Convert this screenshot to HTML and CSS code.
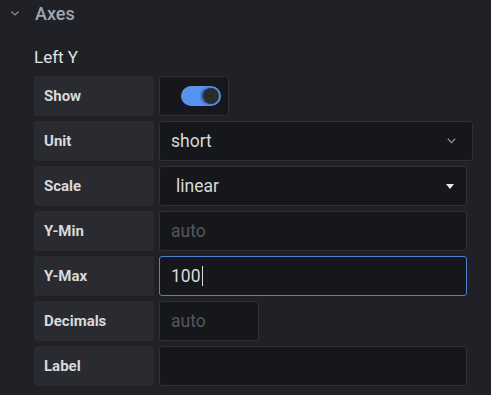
FILE: index.html
```html
<!DOCTYPE html>
<html lang="en">
  <head>
    <meta charset="UTF-8" />
    <meta name="viewport" content="width=device-width, initial-scale=1.0" />
    <title>Axes</title>
    <link rel="stylesheet" href="styles.css">
  </head>
  <body>
    <div class="header">
      <svg class="chevron" width="8" height="5" viewBox="0 0 8 5">
        <path d="M0.5 0.5 L4 4 L7.5 0.5" fill="none" stroke="#8e9096" stroke-width="1.2" />
      </svg>
      <span class="title">Axes</span>
    </div>
    <div class="section">
      <div class="subtitle">Left Y</div>

      <div class="row">
        <div class="label">Show</div>
        <div class="field field-switch">
          <div class="switch"><div class="knob"></div></div>
        </div>
      </div>

      <div class="row">
        <div class="label">Unit</div>
        <div class="field field-wide">
          <span class="value">short</span>
          <svg class="select-chevron" width="9" height="6" viewBox="0 0 9 6">
            <path d="M0.8 0.8 L4.5 4.6 L8.2 0.8" fill="none" stroke="#8e9096" stroke-width="1.3" />
          </svg>
        </div>
      </div>

      <div class="row">
        <div class="label">Scale</div>
        <div class="field field-select">
          <span class="value">linear</span>
          <span class="caret"></span>
        </div>
      </div>

      <div class="row">
        <div class="label">Y-Min</div>
        <div class="field">
          <span class="placeholder">auto</span>
        </div>
      </div>

      <div class="row">
        <div class="label">Y-Max</div>
        <div class="field field-focus">
          <span class="value">100</span><span class="cursor"></span>
        </div>
      </div>

      <div class="row">
        <div class="label">Decimals</div>
        <div class="field field-small">
          <span class="placeholder">auto</span>
        </div>
      </div>

      <div class="row">
        <div class="label">Label</div>
        <div class="field"></div>
      </div>
    </div>
  </body>
</html>
```

FILE: styles.css
```css
* {
  box-sizing: border-box;
}

body {
  margin: 0;
  background: #202126;
  font-family: Roboto, "Liberation Sans", sans-serif;
  color: #d8d9da;
}

.header {
  display: flex;
  align-items: center;
  height: 27px;
  padding-left: 11px;
}

.chevron {
  margin-right: 16px;
}

.title {
  font-size: 18px;
  color: #9fa7b3;
  font-weight: 500;
}

.section {
  padding-left: 34px;
}

.subtitle {
  font-size: 17px;
  line-height: 20px;
  margin-top: 20px;
  margin-bottom: 9px;
  color: #e0e1e3;
}

.row {
  display: flex;
  gap: 5px;
  margin-bottom: 5px;
}

.label {
  display: flex;
  align-items: center;
  width: 120px;
  height: 40px;
  padding-left: 10px;
  background: #2a2b30;
  border-radius: 3px;
  font-size: 15px;
  font-weight: 700;
  color: #d8d9dc;
}

.field {
  display: flex;
  align-items: center;
  width: 308px;
  height: 40px;
  padding-left: 11px;
  background: #16171b;
  border: 1px solid #303137;
  border-radius: 3px;
  font-size: 17.5px;
}

.field-wide {
  width: 314px;
  justify-content: space-between;
  padding-right: 16px;
}

.field-select {
  justify-content: space-between;
  padding-left: 16px;
  padding-right: 12px;
}

.field-switch {
  width: 70px;
  justify-content: flex-end;
  padding-right: 7px;
}

.field-small {
  width: 100px;
}

.field-focus {
  border-color: #4f7fd9;
}

.switch {
  display: flex;
  align-items: center;
  justify-content: flex-end;
  width: 40px;
  height: 20px;
  padding-right: 2px;
  background: #5794f2;
  border-radius: 10px;
}

.knob {
  width: 16px;
  height: 16px;
  border-radius: 50%;
  background: #2b2b2e;
  box-shadow: -2px 0 3px rgba(0, 0, 0, 0.45);
}

.value {
  color: #d8d9da;
}

.placeholder {
  color: #55575d;
}

.cursor {
  width: 1px;
  height: 20px;
  margin-left: 1px;
  background: #d8d9da;
}

.caret {
  width: 0;
  height: 0;
  border-left: 4.5px solid transparent;
  border-right: 4.5px solid transparent;
  border-top: 5px solid #e8e9ea;
}
```
